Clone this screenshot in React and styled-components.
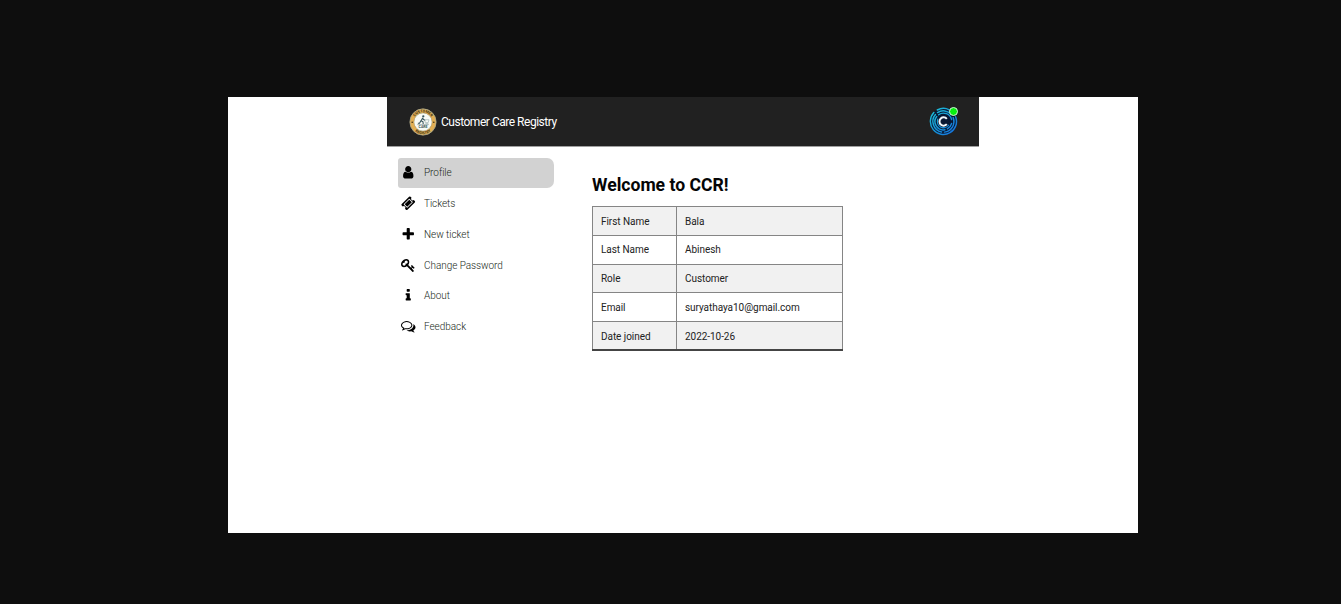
import React from 'react';
import styled, { createGlobalStyle } from 'styled-components';

const GlobalStyle = createGlobalStyle`
  * { box-sizing: border-box; }
  html, body { margin: 0; padding: 0; }
  body { background: #0e0e0e; font-family: Roboto, 'Liberation Sans', sans-serif; }
`;
const Stage = styled.div`
  width: 1341px;
  height: 604px;
  padding: 97px 203px 71px 228px;
  background: #0e0e0e;
  overflow: hidden;
`;
const Page = styled.main`
  height: 436px;
  padding: 0 159px;
  background: #fff;
`;
const Header = styled.header`
  display: flex;
  align-items: center;
  justify-content: space-between;
  height: 50px;
  padding: 0 21px 0 22px;
  background: #212121;
  border-bottom: 1px solid #a0a0a0;
`;
const Brand = styled.div`
  display: flex;
  align-items: center;
  gap: 4px;
  color: #fff;
  font-size: 12px;
  letter-spacing: -0.48px;
  line-height: 16px;
`;
const Avatar = styled.div`
  position: relative;
  width: 29px;
  height: 29px;
  svg { display: block; }
`;
const Presence = styled.span`
  position: absolute;
  top: 0;
  right: 0.5px;
  width: 9px;
  height: 9px;
  border-radius: 50%;
  background: #08f010;
  border: 1px solid #d5f5dc;
`;
const Body = styled.div`
  display: flex;
  align-items: flex-start;
`;
const Nav = styled.nav`
  display: flex;
  flex-direction: column;
  width: 156px;
  margin: 10.6px 0 0 10.5px;
`;
const NavItem = styled.a`
  display: flex;
  align-items: center;
  gap: 8.5px;
  height: 30.75px;
  padding: 0 0 0 3.5px;
  border-radius: 3px 7px 7px 3px;
  background: ${(p) => (p.$active ? '#d2d2d2' : 'transparent')};
  color: #202820;
  font-size: 10px;
  font-weight: 300;
  letter-spacing: -0.05px;
  line-height: 14px;
`;
const Label = styled.span`
  padding-top: 1px;
`;
const Glyph = styled.svg`
  width: 14.5px;
  height: 14.5px;
  margin-bottom: 0.5px;
  fill: #000;
`;
const Content = styled.section`
  margin: 27px 0 0 38.5px;
`;
const Title = styled.h1`
  margin: 0 0 10px;
  color: #050505;
  font-size: 17.6px;
  font-weight: 700;
  line-height: 22px;
`;
const Table = styled.table`
  width: 251px;
  height: 145px;
  border-collapse: collapse;
  table-layout: fixed;
  border: 1px solid #858585;
  border-bottom: 2px solid #444;
`;
const Row = styled.tr`
  background: ${(p) => (p.$shaded ? '#f1f1f1' : '#fff')};
`;
const Cell = styled.td`
  width: ${(p) => p.$width}px;
  height: 28.8px;
  padding: 1.4px 8px 0;
  border: 1px solid #858585;
  color: #222;
  font-size: 10px;
  letter-spacing: -0.05px;
  line-height: 14px;
`;

const icons = {
  user: 'M1536 1399q0 109-62.5 187t-150.5 78h-854q-88 0-150.5-78t-62.5-187q0-85 8.5-160.5t31.5-152 58.5-131 94-89 134.5-34.5q131 128 313 128t313-128q76 0 134.5 34.5t94 89 58.5 131 31.5 152 8.5 160.5zm-256-887q0 159-112.5 271.5t-271.5 112.5-271.5-112.5-112.5-271.5 112.5-271.5 271.5-112.5 271.5 112.5 112.5 271.5z',
  ticket: 'M1024 452l316 316-572 572-316-316zm-211 979l618-618q19-19 19-45t-19-45l-362-362q-18-18-45-18t-45 18l-618 618q-19 19-19 45t19 45l362 362q18 18 45 18t45-18zm889-637l-907 908q-37 37-90.5 37t-90.5-37l-126-126q56-56 56-136t-56-136-136-56-136 56l-125-126q-37-37-37-90.5t37-90.5l907-906q37-37 90.5-37t90.5 37l125 125q-56 56-56 136t56 136 136 56 136-56l126 125q37 37 37 90.5t-37 90.5z',
  plus: 'M1600 736v192q0 40-28 68t-68 28h-416v416q0 40-28 68t-68 28h-192q-40 0-68-28t-28-68v-416h-416q-40 0-68-28t-28-68v-192q0-40 28-68t68-28h416v-416q0-40 28-68t68-28h192q40 0 68 28t28 68v416h416q40 0 68 28t28 68z',
  key: 'M832 512q0-80-56-136t-136-56-136 56-56 136q0 42 19 83-41-19-83-19-80 0-136 56t-56 136 56 136 136 56 136-56 56-136q0-42-19-83 41 19 83 19 80 0 136-56t56-136zm851 704q0 17-49 66t-66 49q-9 0-28.5-16t-36.5-33-38.5-40-24.5-26l-96 96 220 220q28 28 28 68 0 42-39 81t-81 39q-40 0-68-28l-671-671q-176 131-365 131-163 0-265.5-102.5t-102.5-265.5q0-160 95-313t248-248 313-95q163 0 265.5 102.5t102.5 265.5q0 189-131 365l355 355 96-96q-3-3-26-24.5t-40-38.5-33-36.5-16-28.5q0-17 49-66t66-49q13 0 23 10 6 6 46 44.5t82 79.5 86.5 86 73 78 28.5 41z',
  info: 'M1216 1344v128q0 26-19 45t-45 19h-512q-26 0-45-19t-19-45v-128q0-26 19-45t45-19h64v-384h-64q-26 0-45-19t-19-45v-128q0-26 19-45t45-19h384q26 0 45 19t19 45v576h64q26 0 45 19t19 45zm-128-1152v192q0 26-19 45t-45 19h-256q-26 0-45-19t-19-45v-192q0-26 19-45t45-19h256q26 0 45 19t19 45z',
  comments: 'M704 384q-153 0-286 52t-211.5 141-78.5 191q0 82 53 158t149 132l97 56-35 84q34-20 62-39l44-31 53 10q78 14 153 14 153 0 286-52t211.5-141 78.5-191-78.5-191-211.5-141-286-52zm0-128q191 0 353.5 68.5t256.5 186.5 94 257-94 257-256.5 186.5-353.5 68.5q-86 0-176-16-124 88-278 128-36 9-86 16h-3q-11 0-20.5-8t-11.5-21q-1-3-1-6.5t.5-6.5 2-6l2.5-5 3.5-5.5 4-5 4.5-5 4-4.5q5-6 23-25t26-29.5 22.5-29 25-38.5 20.5-44q-124-72-195-177t-71-224q0-139 94-257t256.5-186.5 353.5-68.5zm822 1169q10 24 20.5 44t25 38.5 22.5 29 26 29.5 23 25q1 1 4 4.5t4.5 5 4 5 3.5 5.5l2.5 5 2 6 .5 6.5-1 6.5q-3 14-13 22t-22 7q-50-7-86-16-154-40-278-128-90 16-176 16-271 0-472-132 58 4 88 4 161 0 309-45t264-129q125-92 192-212t67-254q0-77-23-152 129 71 204 178t75 230q0 120-71 224.5t-195 176.5z',
};

const links = [
  ['Profile', 'user'],
  ['Tickets', 'ticket'],
  ['New ticket', 'plus'],
  ['Change Password', 'key'],
  ['About', 'info'],
  ['Feedback', 'comments'],
];

const details = [
  ['First Name', 'Bala'],
  ['Last Name', 'Abinesh'],
  ['Role', 'Customer'],
  ['Email', 'suryathaya10@gmail.com'],
  ['Date joined', '2022-10-26'],
];

function Seal() {
  return (
    <svg width="28" height="28" viewBox="0 0 29 29">
      <defs>
        <path id="sealTop" d="M4.4 14.5a10.1 10.1 0 0 1 20.2 0" />
        <path id="sealBottom" d="M1.9 14.5a12.6 12.6 0 0 0 25.2 0" />
      </defs>
      <circle cx="14.5" cy="14.5" r="13.6" fill="#e2ae52" stroke="#a9aa91" strokeWidth=".8" />
      <circle cx="14.5" cy="14.5" r="9.4" fill="#f8faf5" stroke="#8c8b6d" strokeWidth=".5" />
      <g fill="#33290f" fontFamily="Roboto, sans-serif" fontSize="3.8" fontWeight="700" textAnchor="middle" letterSpacing="0">
        <text><textPath href="#sealTop" startOffset="50%">CUSTOMER</textPath></text>
        <text><textPath href="#sealBottom" startOffset="50%">REGISTRY</textPath></text>
        <text x="14.5" y="20.6" fontSize="3.6" fill="#35525a">CARE</text>
      </g>
      <circle cx="3.3" cy="14.8" r=".8" fill="#33290f" />
      <circle cx="25.7" cy="14.8" r=".8" fill="#33290f" />
      <circle cx="14.8" cy="8.6" r="1.2" fill="#35525a" />
      <path d="M14.3 10l-1.8 3.2 2 1.1.2 2.2M12.5 13l-1.6 2.8H9.2M14 10.9l2.6 2" fill="none" stroke="#35525a" strokeWidth="1.1" />
      <path d="M16.3 12.2h4.4l-.8 2.9h-3zm.7 3.9h3" fill="none" stroke="#9db1b3" strokeWidth=".7" />
      <path d="M8.5 17.2h12" stroke="#58747a" strokeWidth=".5" />
    </svg>
  );
}

function RingLogo() {
  return (
    <svg width="29" height="29" viewBox="0 0 30 30">
      <defs>
        <linearGradient id="ring" x1="0" y1="0" x2="30" y2="30" gradientUnits="userSpaceOnUse">
          <stop offset="0" stopColor="#20cbd6" />
          <stop offset="0.5" stopColor="#1795d6" />
          <stop offset="1" stopColor="#1669e0" />
        </linearGradient>
      </defs>
      <circle cx="15" cy="15" r="13.8" fill="#071733" />
      <g fill="none" stroke="url(#ring)" strokeWidth="1.5" strokeLinecap="round">
        <path d="M8.6 3.1A13.5 13.5 0 0 1 21 2.9M27.5 10A13.5 13.5 0 1 1 5 5.8" />
        <path d="M8.8 5.8A11 11 0 0 1 23 7.6M25 11A11 11 0 0 1 16 26M13 25.8A11 11 0 0 1 6.7 7.8" />
        <path d="M10 8A8.6 8.6 0 0 1 23.4 13M23.4 17A8.6 8.6 0 0 1 19 22.6M16.5 23.5A8.6 8.6 0 0 1 8 9.8" />
        <path d="M20 19A6.3 6.3 0 0 1 9.2 12.8" />
      </g>
      <circle cx="15" cy="15" r="5.7" fill="#0a1833" />
      <path d="M18.4 12.2A4.3 4.3 0 1 0 18.4 17.8" fill="none" stroke="#f2f7fc" strokeWidth="2.1" />
    </svg>
  );
}

export default function App() {
  return (
    <Stage>
      <GlobalStyle />
      <Page>
        <Header>
          <Brand><Seal /><span>Customer Care Registry</span></Brand>
          <Avatar><RingLogo /><Presence /></Avatar>
        </Header>
        <Body>
          <Nav>
            {links.map(([label, icon], i) => (
              <NavItem key={label} $active={i === 0}>
                <Glyph viewBox="0 0 1792 1792"><path d={icons[icon]} /></Glyph>
                <Label>{label}</Label>
              </NavItem>
            ))}
          </Nav>
          <Content>
            <Title>Welcome to CCR!</Title>
            <Table>
              <tbody>
                {details.map(([name, value], i) => (
                  <Row key={name} $shaded={i % 2 === 0}>
                    <Cell $width={84}>{name}</Cell>
                    <Cell $width={166}>{value}</Cell>
                  </Row>
                ))}
              </tbody>
            </Table>
          </Content>
        </Body>
      </Page>
    </Stage>
  );
}
